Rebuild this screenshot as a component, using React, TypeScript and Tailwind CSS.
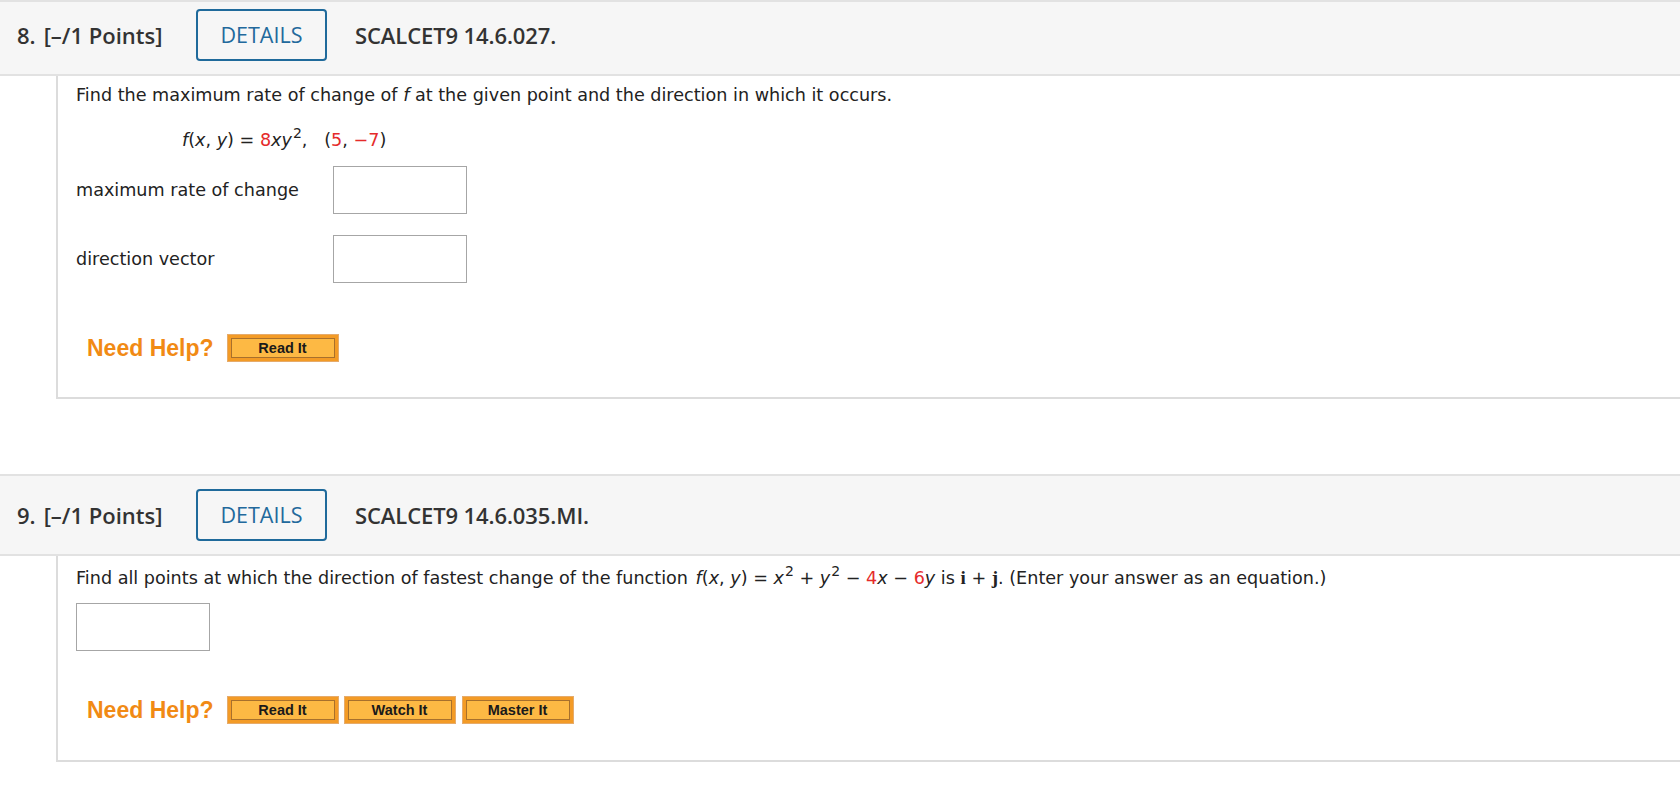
import React from "react";

function Header({ num, code, first }: { num: number; code: string; first?: boolean }) {
  return (
    <div
      className={`flex items-center border-t-2 border-b-2 border-[#e2e2e2] bg-[#f6f6f6] pl-[17px] font-['Open_Sans','Noto_Sans',sans-serif] leading-[30px] ${
        first ? "pt-[7px] pb-[13px]" : "py-[13px]"
      }`}
    >
      <span className="w-[179px] whitespace-nowrap text-[22px] font-semibold text-[#333]">
        <span className="mr-[8px]">{num}.</span>[–/1 Points]
      </span>
      <div className="flex h-[52px] w-[131px] items-center justify-center rounded-[4px] border-2 border-[#1f6a9b] text-[21.5px] text-[#22699c]">
        DETAILS
      </div>
      <span className="ml-[28px] text-[22px] font-semibold tracking-[-0.1px] text-[#333]">{code}</span>
    </div>
  );
}

function HelpButton({ label }: { label: string }) {
  return (
    <div className="h-[28px] w-[112px] border border-[#e6ab6a] bg-[#f39b26] p-[3px]">
      <div className="flex h-full items-center justify-center border border-[#a8702c] bg-[#fdb944] font-['Liberation_Sans',Arial,sans-serif] text-[14.5px] leading-none font-bold text-[#1a1a1a]">
        {label}
      </div>
    </div>
  );
}

function NeedHelp({ buttons }: { buttons: string[] }) {
  return (
    <div className="flex items-center pl-[11px]">
      <span className="mr-[13px] font-['Liberation_Sans',Arial,sans-serif] text-[23px] leading-[28px] font-bold text-[#f18a14]">
        Need Help?
      </span>
      <div className="flex gap-[5px]">
        {buttons.map((b, i) => (
          <div key={b} className={i === 2 ? "ml-[1px]" : ""}>
            <HelpButton label={b} />
          </div>
        ))}
      </div>
    </div>
  );
}

function AnswerBox() {
  return <div className="h-[48px] w-[134px] border border-[#a6a6a6] bg-white" />;
}

const Red = ({ children }: { children: React.ReactNode }) => <span className="text-[#e52b2b]">{children}</span>;

const Sq = () => <sup className="top-[-8px] ml-[1px] text-[14px]">2</sup>;

export default function App() {
  return (
    <div className="h-[792px] w-[1680px] overflow-hidden bg-white font-['DejaVu_Sans',Verdana,sans-serif] text-[17.6px] text-[#222]">
      <Header num={8} code="SCALCET9 14.6.027." first />
      <div className="ml-[56px] border-b-2 border-l-2 border-[#dcdcdc] pb-[35px] pl-[18px] pt-[9px]">
        <div className="h-[20px] leading-[20px] whitespace-nowrap">
          Find the maximum rate of change of <i>f</i> at the given point and the direction in which it occurs.
        </div>
        <div className="mt-[25px] h-[20px] pl-[106px] leading-[20px] whitespace-nowrap">
          <i>f</i>(<i>x</i>, <i>y</i>) = <Red>8</Red>
          <i>xy</i>
          <Sq />,&nbsp;&nbsp;&nbsp;(<Red>5</Red>, <Red>−7</Red>)
        </div>
        <div className="mt-[16px] flex items-center">
          <span className="w-[257px] leading-[20px]">maximum rate of change</span>
          <AnswerBox />
        </div>
        <div className="mt-[21px] flex items-center">
          <span className="w-[257px] leading-[20px]">direction vector</span>
          <AnswerBox />
        </div>
        <div className="mt-[51px]">
          <NeedHelp buttons={["Read It"]} />
        </div>
      </div>

      <div className="h-[75px]" />

      <Header num={9} code="SCALCET9 14.6.035.MI." />
      <div className="ml-[56px] border-b-2 border-l-2 border-[#dcdcdc] pb-[36px] pl-[18px] pt-[12px]">
        <div className="h-[20px] leading-[20px] whitespace-nowrap">
          Find all points at which the direction of fastest change of the function{" "}
          <span className="ml-[2px]">
            <i>f</i>(<i>x</i>, <i>y</i>)
          </span>{" "}
          = <i>x</i>
          <Sq /> + <i>y</i>
          <Sq /> − <Red>4</Red>
          <i>x</i> − <Red>6</Red>
          <i>y</i> is{" "}
          <b className="font-['Liberation_Serif',serif] text-[19px]">i</b> +{" "}
          <b className="font-['Liberation_Serif',serif] text-[19px]">j</b>. (Enter your answer as an equation.)
        </div>
        <div className="mt-[15px]">
          <AnswerBox />
        </div>
        <div className="mt-[45px]">
          <NeedHelp buttons={["Read It", "Watch It", "Master It"]} />
        </div>
      </div>
    </div>
  );
}
